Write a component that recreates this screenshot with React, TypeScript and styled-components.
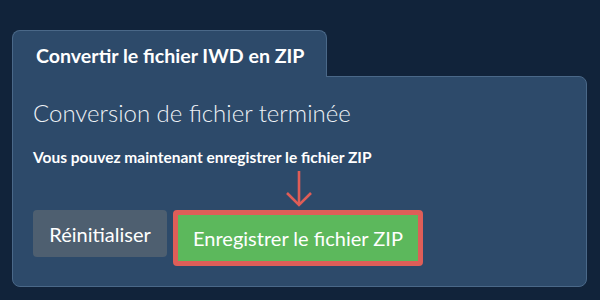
import React from "react";
import styled, { createGlobalStyle } from "styled-components";

const Global = createGlobalStyle`
  html, body { margin: 0; padding: 0; background: #11233a; }
  body { font-family: Lato, "Open Sans", sans-serif; color: #fff; }
`;

const Page = styled.div`
  width: 600px;
  height: 300px;
  box-sizing: border-box;
  padding: 30px 13px 13px 12px;
  background: #11233a;
`;

const Tab = styled.div`
  display: inline-block;
  position: relative;
  z-index: 1;
  margin-bottom: -1px;
  height: 47px;
  box-sizing: border-box;
  padding: 0 21px 0 23px;
  background: #2d4a6a;
  border: 1px solid #4a6888;
  border-bottom: none;
  border-radius: 8px 8px 0 0;
  font-weight: 700;
  font-size: 19.6px;
  line-height: 50px;
  color: #fff;
`;

const Panel = styled.div`
  background: #2d4a6a;
  border: 1px solid #4a6888;
  border-radius: 0 8px 8px 8px;
  padding: 14px 20px 20px 20px;
`;

const Heading = styled.h2`
  margin: 0;
  font-weight: 300;
  font-size: 24px;
  line-height: 44px;
  color: #eef2f6;
`;

const Subtitle = styled.p`
  margin: 12px 0 0 0;
  font-weight: 700;
  font-size: 15.5px;
  line-height: 20px;
  color: #fff;
`;

const ArrowWrap = styled.div`
  display: flex;
  justify-content: flex-start;
  padding-left: 251px;
  height: 40px;
  align-items: flex-end;
`;

const Actions = styled.div`
  display: flex;
  align-items: flex-start;
  gap: 6px;
  margin-top: 3px;
`;

const Button = styled.button<{ $variant: "reset" | "save" }>`
  font-family: Lato, "Open Sans", sans-serif;
  font-size: 20px;
  font-weight: 400;
  color: #fff;
  cursor: pointer;
  border-radius: 4px;
  box-sizing: border-box;
  padding: 0;
  ${(p) =>
    p.$variant === "reset"
      ? `
    background: #4e5f70;
    border: none;
    height: 47px;
    width: 134px;
  `
      : `
    background: #5cb85c;
    border: 5px solid #de5e58;
    height: 56px;
    width: 250px;
  `}
`;

function DownArrow() {
  return (
    <svg width="30" height="36" viewBox="0 0 30 36">
      <g fill="none" stroke="#df5d57" strokeWidth="2.6" strokeLinecap="butt">
        <line x1="15" y1="0" x2="15" y2="34" />
        <polyline points="3,22 15,34 27,22" />
      </g>
    </svg>
  );
}

export default function App() {
  return (
    <>
      <Global />
      <Page>
        <Tab>Convertir le fichier IWD en ZIP</Tab>
        <Panel>
          <Heading>Conversion de fichier terminée</Heading>
          <Subtitle>Vous pouvez maintenant enregistrer le fichier ZIP</Subtitle>
          <ArrowWrap>
            <DownArrow />
          </ArrowWrap>
          <Actions>
            <Button $variant="reset">Réinitialiser</Button>
            <Button $variant="save">Enregistrer le fichier ZIP</Button>
          </Actions>
        </Panel>
      </Page>
    </>
  );
}
